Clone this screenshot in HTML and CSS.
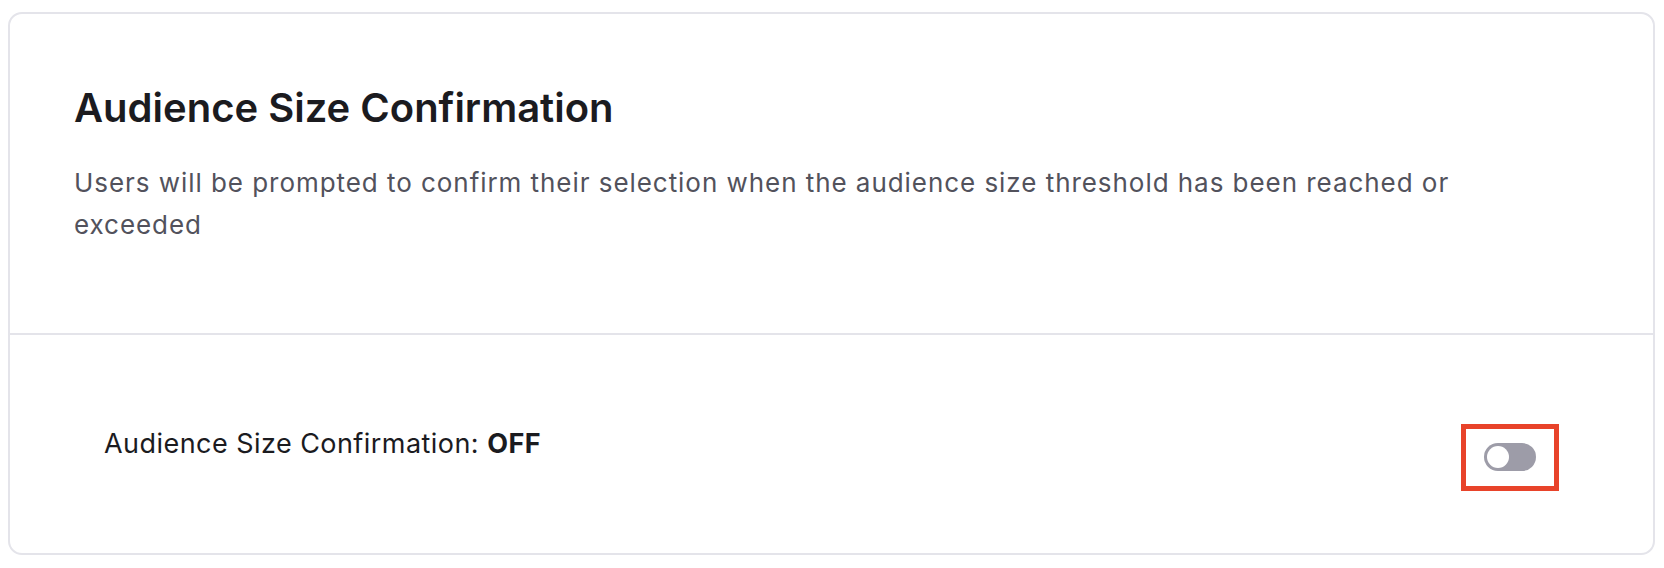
FILE: index.html
```html
<!DOCTYPE html>
<html lang="en">
<head>
  <meta charset="UTF-8" />
  <meta name="viewport" content="width=device-width, initial-scale=1.0"/>
  <title>Audience Size Confirmation</title>
  <link rel="stylesheet" href="styles.css">
</head>
<body>
  <div class="card">
    <div class="card-header">
      <div class="title">Audience Size Confirmation</div>
      <p class="description">
        Users will be prompted to confirm their selection when the audience size threshold has been reached or exceeded
      </p>
    </div>
    <div class="setting-row">
      <div class="setting-label">Audience Size Confirmation: <strong>OFF</strong></div>
      <div class="highlight">
        <button class="switch" type="button" aria-pressed="false">
          <span class="knob"></span>
        </button>
      </div>
    </div>
  </div>
</body>
</html>
```

FILE: styles.css
```css
* {
  box-sizing: border-box;
}

body {
  margin: 0;
  padding: 12px 9px 0 8px;
  font-family: 'Inter', 'Liberation Sans', sans-serif;
  background: #ffffff;
}

.card {
  background: #ffffff;
  border: 2px solid #e4e4ea;
  border-radius: 14px;
  height: 543px;
}

.card-header {
  padding: 70px 64px 0 64px;
  height: 321px;
  border-bottom: 2px solid #e4e4ea;
}

.title {
  font-size: 40px;
  line-height: 48px;
  font-weight: 600;
  color: #1b1b1f;
}

.description {
  margin: 30px 0 0;
  max-width: 1420px;
  font-size: 26px;
  line-height: 42px;
  letter-spacing: 0.95px;
  color: #52525c;
}

.setting-row {
  display: flex;
  justify-content: space-between;
  align-items: flex-start;
  padding: 89px 94px 0 94px;
}

.setting-label {
  font-size: 27px;
  line-height: 40px;
  letter-spacing: 0.45px;
  color: #1b1b1f;
}

.setting-label strong {
  font-weight: 700;
}

.highlight {
  border: 5px solid #e8432a;
  padding: 14px 18px 15px;
}

.switch {
  display: block;
  width: 52px;
  height: 28px;
  padding: 0;
  border: none;
  border-radius: 14px;
  background: #9d9ca8;
  position: relative;
  cursor: pointer;
}

.knob {
  position: absolute;
  top: 3px;
  left: 3px;
  width: 22px;
  height: 22px;
  border-radius: 50%;
  background: #ffffff;
}
```
